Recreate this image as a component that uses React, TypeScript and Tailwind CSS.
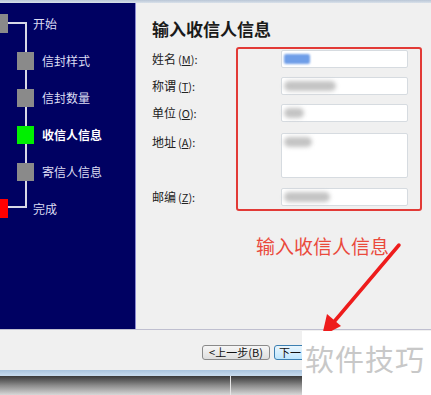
import React from "react";

const font = { fontFamily: '"Noto Sans CJK SC", "Noto Sans", sans-serif' };

type Step = { label: string; state: "done" | "todo" | "active" };

const steps: Step[] = [
  { label: "信封样式", state: "todo" },
  { label: "信封数量", state: "todo" },
  { label: "收信人信息", state: "active" },
  { label: "寄信人信息", state: "todo" },
];

function Key({ k }: { k: string }) {
  return (
    <span className="text-[11px]">
      (<span className="underline">{k}</span>):
    </span>
  );
}

function Blur({ w, blue }: { w: number; blue?: boolean }) {
  return (
    <div className="flex h-full items-center pl-[2px]">
      <div
        className={
          blue
            ? "h-[10px] rounded-[2px] bg-[#6f9ee8] blur-[1px]"
            : "h-[10px] rounded-full bg-[#c4c4c4] blur-[2px]"
        }
        style={{ width: w }}
      />
    </div>
  );
}

function Field({ label, k, h, blur, blue, mt }: { label: string; k: string; h: number; blur: number; blue?: boolean; mt: string }) {
  return (
    <div className={`flex items-start ${mt}`}>
      <div className="w-[129px] flex items-center h-[18px] text-[12px] text-[#222] gap-[2px]">
        {label}
        <Key k={k} />
      </div>
      <div
        className="w-[127px] rounded-[2px] border border-[#d6dbe0] bg-white"
        style={{ height: h }}
      >
        <div className="h-[16px]">
          <Blur w={blur} blue={blue} />
        </div>
      </div>
    </div>
  );
}

export default function App() {
  return (
    <div className="relative h-[395px] w-[431px] overflow-hidden bg-[#f0f0f0]" style={font}>
      <div className="flex h-[395px] flex-col">
        <div className="h-[3px] bg-gradient-to-b from-[#b9c6d6] to-[#d9e1ea]" />

        <div className="flex h-[326px]">
          {/* wizard step tree */}
          <div className="relative w-[135px] bg-[#000162] pt-[2px]">
            <div className="absolute left-[25px] top-[19px] h-[186px] w-[2px] bg-[#d8d8e6]" />
            <div className="absolute left-[8px] top-[19px] h-[2px] w-[18px] bg-[#d8d8e6]" />
            <div className="absolute left-0 top-[203px] h-[2px] w-[26px] bg-[#d8d8e6]" />

            <div className="relative flex h-[37px] items-center">
              <div className="h-[19px] w-[8px] bg-[#8a8a8a]" />
              <span className="ml-[25px] text-[12px] text-[#dcdcf2]">开始</span>
            </div>
            {steps.map((s) => (
              <div key={s.label} className="relative flex h-[37px] items-center">
                <div
                  className={`ml-[17px] h-[18px] w-[17px] ${s.state === "active" ? "bg-[#00f000]" : "bg-[#8a8a8a]"}`}
                />
                <span
                  className={`ml-[8px] text-[12px] ${s.state === "active" ? "font-bold text-white" : "text-[#dcdcf2]"}`}
                >
                  {s.label}
                </span>
              </div>
            ))}
            <div className="relative flex h-[37px] items-center">
              <div className="h-[19px] w-[8px] bg-[#ff0000]" />
              <span className="ml-[25px] text-[12px] text-[#dcdcf2]">完成</span>
            </div>
          </div>

          {/* form */}
          <div className="relative flex-1 border-l border-[#8a8ad0] bg-[#f0f0f0] pl-[16px]">
            <h1 className="mt-[14px] text-[17px] font-bold leading-[24px] text-[#1a1a1a]">输入收信人信息</h1>
            <div className="mt-[9px] flex flex-col">
              <Field label="姓名" k="M" h={18} blur={26} blue mt="" />
              <Field label="称谓" k="T" h={18} blur={52} mt="mt-[9px]" />
              <Field label="单位" k="O" h={18} blur={20} mt="mt-[9px]" />
              <Field label="地址" k="A" h={45} blur={28} mt="mt-[11px]" />
              <Field label="邮编" k="Z" h={18} blur={46} mt="mt-[10px]" />
            </div>
            <div className="absolute left-[100px] top-[44px] h-[164px] w-[186px] rounded-[3px] border-2 border-[#e23a36]" />
            <div className="mt-[27px] pl-[104px] text-[19px] leading-[26px] text-[#ea4a3c]">输入收信人信息</div>
          </div>
        </div>

        {/* button bar */}
        <div className="flex h-[41px] items-start border-t border-[#bfbfd0] bg-[#f0f0f0] pl-[202px] pt-[15px]">
          <button className="flex h-[15px] w-[68px] items-center justify-center rounded-[3px] border border-[#8a8a8a] bg-gradient-to-b from-[#f6f6f6] to-[#dedede] text-[11px] leading-none text-[#111]">
            &lt;上一步(B)
          </button>
          <button className="ml-[4px] flex h-[15px] w-[40px] items-center justify-start overflow-hidden rounded-[3px] border border-[#3c7fb1] bg-gradient-to-b from-[#eaf6fd] to-[#bee6fd] pl-[4px] text-[11px] leading-none text-[#111]">
            下一
          </button>
        </div>
        <div className="h-[6px] bg-gradient-to-b from-[#a9c4de] to-[#c9dcee]" />
        <div className="flex h-[19px]">
          <div className="w-[230px] bg-gradient-to-b from-[#3a3a3a] via-[#8c8c8c] to-[#d8d8d8]" />
          <div className="w-px bg-[#e6e6e6]" />
          <div className="flex-1 bg-gradient-to-b from-[#3a3a3a] via-[#8c8c8c] to-[#d8d8d8]" />
        </div>
      </div>

      {/* annotation arrow */}
      <svg className="absolute left-0 top-0" width="431" height="395" viewBox="0 0 431 395">
        <line x1="399" y1="245" x2="333" y2="323" stroke="#ee1c1c" strokeWidth="3.5" strokeLinecap="round" />
        <polygon points="322,336 327,314 341,326" fill="#ee1c1c" />
      </svg>

      {/* watermark */}
      <div className="absolute left-[302px] top-[331px] flex h-[64px] w-[129px] items-start bg-white pl-[3px] pt-[8px]">
        <span className="text-[29px] leading-[38px] tracking-[1px] text-[#c8c8c8]">软件技巧</span>
      </div>
    </div>
  );
}
